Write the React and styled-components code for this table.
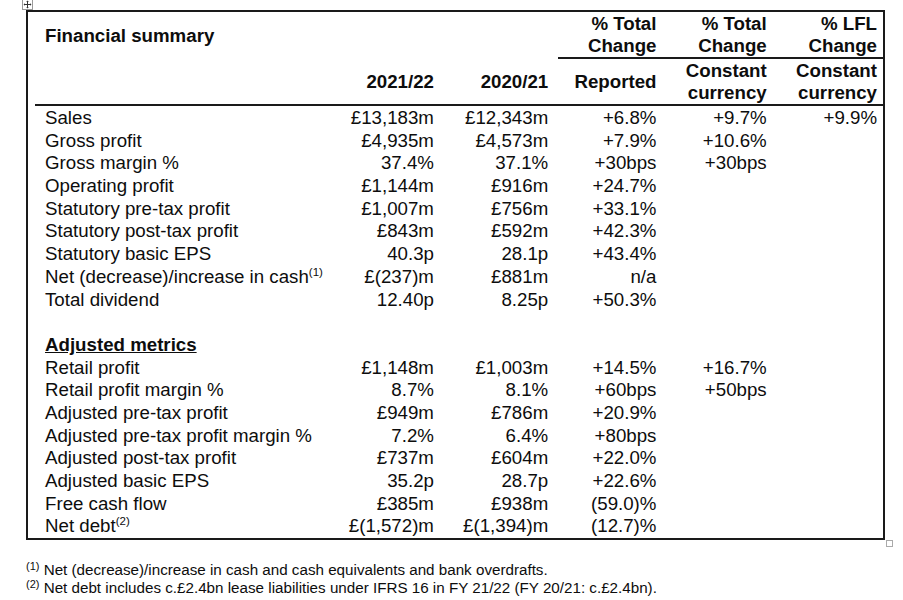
import styled, { createGlobalStyle } from "styled-components";

const GlobalStyle = createGlobalStyle`
  body {
    margin: 0;
    background: #fff;
    font-family: "Liberation Sans", Arial, sans-serif;
    color: #0d0d0d;
  }
`;

const summaryRows = [
  ["Sales", "£13,183m", "£12,343m", "+6.8%", "+9.7%", "+9.9%"],
  ["Gross profit", "£4,935m", "£4,573m", "+7.9%", "+10.6%", ""],
  ["Gross margin %", "37.4%", "37.1%", "+30bps", "+30bps", ""],
  ["Operating profit", "£1,144m", "£916m", "+24.7%", "", ""],
  ["Statutory pre-tax profit", "£1,007m", "£756m", "+33.1%", "", ""],
  ["Statutory post-tax profit", "£843m", "£592m", "+42.3%", "", ""],
  ["Statutory basic EPS", "40.3p", "28.1p", "+43.4%", "", ""],
  ["Net (decrease)/increase in cash", "£(237)m", "£881m", "n/a", "", "", "(1)"],
  ["Total dividend", "12.40p", "8.25p", "+50.3%", "", ""],
];

const adjustedRows = [
  ["Retail profit", "£1,148m", "£1,003m", "+14.5%", "+16.7%", ""],
  ["Retail profit margin %", "8.7%", "8.1%", "+60bps", "+50bps", ""],
  ["Adjusted pre-tax profit", "£949m", "£786m", "+20.9%", "", ""],
  ["Adjusted pre-tax profit margin %", "7.2%", "6.4%", "+80bps", "", ""],
  ["Adjusted post-tax profit", "£737m", "£604m", "+22.0%", "", ""],
  ["Adjusted basic EPS", "35.2p", "28.7p", "+22.6%", "", ""],
  ["Free cash flow", "£385m", "£938m", "(59.0)%", "", ""],
  ["Net debt", "£(1,572)m", "£(1,394)m", "(12.7)%", "", "", "(2)"],
];

const MoveHandle = () => (
  <Handle>
    <svg width="11" height="11" viewBox="0 0 11 11">
      <rect x="0.5" y="0.5" width="10" height="10" fill="#fff" stroke="#9a9a9a" />
      <path d="M5.5 2v7M2 5.5h7" stroke="#333" strokeWidth="1" />
      <path d="M5.5 1.5l-1.3 1.5h2.6zM5.5 9.5l-1.3-1.5h2.6zM1.5 5.5l1.5-1.3v2.6zM9.5 5.5l-1.5-1.3v2.6z" fill="#333" />
    </svg>
  </Handle>
);

const DataRow = ({ row }) => {
  const [label, a, b, c, d, e, note] = row;
  return (
    <tr>
      <Label>
        {label}
        {note && <Sup>{note}</Sup>}
      </Label>
      {[a, b, c, d, e].map((v, i) => (
        <Num key={i} $last={i === 4}>
          {v}
        </Num>
      ))}
    </tr>
  );
};

const App = () => {
  return (
    <Page>
      <GlobalStyle />
      <Frame>
        <MoveHandle />
        <ResizeDot />
        <Table>
          <colgroup>
            <col style={{ width: 298 }} />
            <col style={{ width: 110 }} />
            <col style={{ width: 114 }} />
            <col style={{ width: 108 }} />
            <col style={{ width: 110 }} />
            <col style={{ width: 108 }} />
          </colgroup>
          <thead>
            <tr>
              <Title>Financial summary</Title>
              <Head />
              <Head />
              <Head $rule>
                % Total
                <br />
                Change
              </Head>
              <Head $rule>
                % Total
                <br />
                Change
              </Head>
              <Head $rule $last>
                % LFL
                <br />
                Change
              </Head>
            </tr>
            <tr>
              <Head $base />
              <Head $base>2021/22</Head>
              <Head $base>2020/21</Head>
              <Head $base>Reported</Head>
              <Head $base>
                Constant
                <br />
                currency
              </Head>
              <Head $base $last>
                Constant
                <br />
                currency
              </Head>
            </tr>
          </thead>
          <Body>
            {summaryRows.map((r) => (
              <DataRow key={r[0]} row={r} />
            ))}
            <tr>
              <Label>&nbsp;</Label>
            </tr>
            <tr>
              <Label>
                <Section>Adjusted metrics</Section>
              </Label>
            </tr>
            {adjustedRows.map((r) => (
              <DataRow key={r[0]} row={r} />
            ))}
          </Body>
        </Table>
      </Frame>
      <Notes>
        <Note>
          <NoteSup>(1)</NoteSup> Net (decrease)/increase in cash and cash
          equivalents and bank overdrafts.
        </Note>
        <Note>
          <NoteSup>(2)</NoteSup> Net debt includes c.£2.4bn lease liabilities
          under IFRS 16 in FY 21/22 (FY 20/21: c.£2.4bn).
        </Note>
      </Notes>
    </Page>
  );
};

const Page = styled.div`
  padding: 10px 0 0 26px;
  width: 903px;
  height: 600px;
  box-sizing: border-box;
  overflow: hidden;
`;

const Frame = styled.div`
  position: relative;
  width: 859px;
  box-sizing: border-box;
  border: 2px solid #1a1a1a;
  padding-left: 7px;
`;

const Handle = styled.div`
  position: absolute;
  left: -6px;
  top: -13px;
  width: 11px;
  height: 11px;
  line-height: 0;
`;

const ResizeDot = styled.div`
  position: absolute;
  right: -10px;
  bottom: -9px;
  width: 5px;
  height: 5px;
  border: 1px solid #aaa;
  background: #fff;
`;

const Table = styled.table`
  width: 850px;
  table-layout: fixed;
  border-collapse: separate;
  border-spacing: 0;
  font-size: 18.7px;
`;

const Body = styled.tbody`
  tr:first-child td {
    padding-top: 1px;
  }
`;

const Head = styled.th`
  height: 45px;
  padding: 0 ${(p) => (p.$last ? 8 : 10)}px 0 0;
  text-align: right;
  vertical-align: middle;
  font-weight: bold;
  line-height: 22px;
  white-space: nowrap;
  border-bottom: ${(p) => (p.$rule || p.$base ? "2px solid #1a1a1a" : "0")};
`;

const Title = styled.th`
  height: 45px;
  padding: 0 0 0 10px;
  text-align: left;
  vertical-align: middle;
  font-weight: bold;
  line-height: 22px;
`;

const Label = styled.td`
  padding: 0 0 0 10px;
  line-height: 22.68px;
  white-space: nowrap;
`;

const Num = styled.td`
  padding: 0 ${(p) => (p.$last ? 8 : 10)}px 0 0;
  text-align: right;
  line-height: 22.68px;
  white-space: nowrap;
`;

const Sup = styled.sup`
  font-size: 11.5px;
  line-height: 0;
  vertical-align: 7px;
`;

const Section = styled.span`
  font-weight: bold;
  text-decoration: underline;
`;

const Notes = styled.div`
  margin-top: 21px;
  font-size: 15.2px;
  line-height: 18px;
`;

const Note = styled.div`
  white-space: nowrap;
`;

const NoteSup = styled.sup`
  font-size: 11px;
  line-height: 0;
  vertical-align: 5px;
`;

export default App;
